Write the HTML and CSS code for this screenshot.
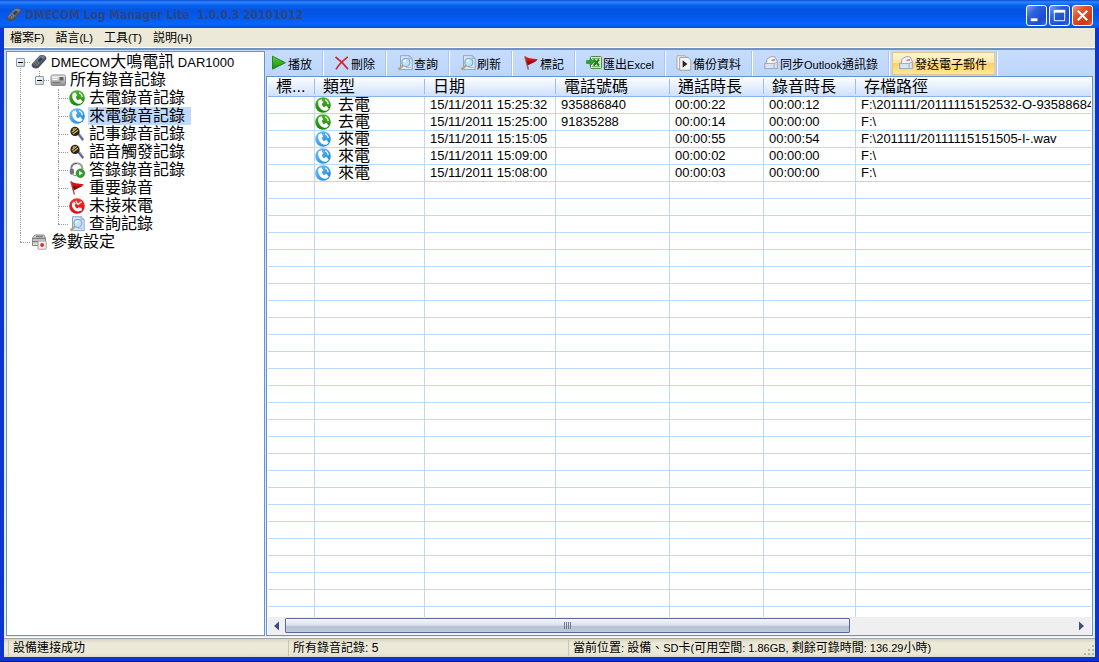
FILE: index.html
```html
<!DOCTYPE html>
<html lang="zh-Hant">
<head>
<meta charset="utf-8">
<title>DMECOM Log Manager Lite</title>
<link rel="stylesheet" href="styles.css">
</head>
<body>
<svg class="sprite" aria-hidden="true">
  <defs>
    <linearGradient id="g-green" x1="0" y1="0" x2="0" y2="1"><stop offset="0" stop-color="#4db52c"/><stop offset="1" stop-color="#1c8307"/></linearGradient>
    <linearGradient id="g-blue" x1="0" y1="0" x2="1" y2="1"><stop offset="0" stop-color="#7cc6f8"/><stop offset="1" stop-color="#0b7fe0"/></linearGradient>
    <linearGradient id="g-red" x1="0" y1="0" x2="0" y2="1"><stop offset="0" stop-color="#f4332c"/><stop offset="1" stop-color="#e00810"/></linearGradient>
    <linearGradient id="g-steel" x1="0" y1="0" x2="0" y2="1"><stop offset="0" stop-color="#f4f4f4"/><stop offset="1" stop-color="#8b8b8b"/></linearGradient>
    <linearGradient id="g-play" x1="0" y1="0" x2="0" y2="1"><stop offset="0" stop-color="#5fd03c"/><stop offset="1" stop-color="#128a0e"/></linearGradient>
    <path id="handset" d="M6.4 2.2 3.6 3.4C1.8 8.4 6 14.2 11.4 13.8L13.8 11.8 11.4 8.8 8.9 10.2C7.7 9.3 6.9 8 6.8 6.8L8.2 5.4Z"/>
    <path id="waves" d="M10 2.8C12 3.6 13.2 5 13.2 7.2" fill="none" stroke="#fff" stroke-width="1.1"/>
  </defs>
  <symbol id="i-out" viewBox="0 0 16 16"><circle cx="8" cy="8" r="7.8" fill="url(#g-green)"/><use href="#handset" fill="#fff"/><use href="#waves"/></symbol>
  <symbol id="i-in" viewBox="0 0 16 16"><circle cx="8" cy="8" r="7.8" fill="url(#g-blue)"/><use href="#handset" fill="#fff"/><use href="#waves"/></symbol>
  <symbol id="i-missed" viewBox="0 0 16 16"><circle cx="8" cy="8" r="7.8" fill="url(#g-red)"/><path d="M3 5.4C2.4 9 5 13.2 9 13.4L13 12.6 12.6 10 9.6 9.3 8.6 10.6C7 10 6 8.6 5.8 7.2L6.8 5.6 4.8 3.6Z" fill="#fff"/><path d="M6.6 3.2 9 6.4 12.6 3.8" fill="none" stroke="#fff" stroke-width="1.3"/></symbol>
  <symbol id="i-device" viewBox="0 0 16 16"><path d="M.8 10 8.6 1.4Q10 .4 13.6 1.4 15.8 2.4 15.4 5L7.6 13.8Q4.8 15.4 1.8 13.6 0 12 .8 10Z" fill="#4a4e58"/><path d="M1.6 9.8 9.2 1.8Q13 1.2 14.6 3L6.6 11.4Q4 12.4 1.6 9.8Z" fill="#747a86"/><path d="M6.6 6.4 9.6 3.4 12 5 8.8 8.2Z" fill="#26406f"/><path d="M3.6 9.6 5.2 10.8M5.2 8 6.8 9.2" stroke="#30343c" stroke-width="1"/></symbol>
  <symbol id="i-recorder" viewBox="0 0 16 16"><rect x="1" y="3" width="14.5" height="10.5" rx="1.5" fill="url(#g-steel)" stroke="#8a8a8a"/><path d="M2.5 5.5h5M2.5 7.5h5" stroke="#fff"/><path d="M2.5 10.5h8" stroke="#777" stroke-width="1.4"/><rect x="9.5" y="5" width="4" height="3.5" fill="#606060"/></symbol>
  <symbol id="i-mic" viewBox="0 0 16 16"><path d="M7.2 7.2 9.4 5.6 15.2 13 13.3 15.2Z" fill="#8d96b7"/><path d="M8.5 7.2 14 13.8" stroke="#4f5a84" stroke-width="1.1"/><circle cx="6" cy="5.4" r="4.6" fill="#25231f"/><path d="M2.8 6.2 7.7 2.2M4 8 9 4.2" stroke="#d8b542" stroke-width="1.2"/><path d="M3.7 3.6 5.5 2.4" stroke="#f2f0e4"/></symbol>
  <symbol id="i-headset" viewBox="0 0 16 16"><path d="M2.2 9.4V6.5C2.4 3 4.7 1.3 7.6 1.3S13.2 3 13.4 7" fill="none" stroke="#9c9c9c" stroke-width="2"/><path d="M2.4 5.4C3.1 2.7 5 1.5 7.6 1.5" fill="none" stroke="#555" stroke-width="1"/><rect x=".8" y="6.5" width="4.2" height="6.2" rx="2" fill="#737373"/><path d="M4 12.8Q5.6 14.2 7.2 13.6" stroke="#777" fill="none"/><circle cx="11.4" cy="11.2" r="4.3" fill="#2ea12a" stroke="#177a15" stroke-width=".6"/><path d="M10.1 8.8 13.8 11.2 10.1 13.6Z" fill="#fff"/></symbol>
  <symbol id="i-flag" viewBox="0 0 16 16"><path d="M1.8 1.2 5.4 14.5" stroke="#a4584c" stroke-width="1.4"/><path d="M2 1.2C5 3.2 8.5 3.6 14.8 4L13 6.2 4.8 10.2Z" fill="#d41718"/><path d="M3.4 5.8C7 6 10.4 5.8 13.4 5.8L4.8 10.2Z" fill="#9c080d"/></symbol>
  <symbol id="i-find" viewBox="0 0 16 16"><path d="M3.5.7H12L15.2 3.6V14.6H3.5Z" fill="#d9e8fa" stroke="#86a8d1"/><path d="M12 .7V3.6H15.2Z" fill="#bcd4ef" stroke="#86a8d1" stroke-width=".7"/><path d="M9 12.5H14" stroke="#a9c4e4"/><path d="M5.8 10.5 1.5 14.7" stroke="#c2a06b" stroke-width="2.4"/><circle cx="8.8" cy="7.4" r="4" fill="#bfe5fb" stroke="#8fa9c0" stroke-width="1.3"/><path d="M6.6 7Q7.2 5.2 9.2 5" fill="none" stroke="#fff" stroke-width="1.3"/></symbol>
  <symbol id="i-settings" viewBox="0 0 16 16"><path d="M1.5 4 4 1H13L14.5 4V11.5H1.5Z" fill="#d7d7d7" stroke="#878787"/><path d="M2 4.5H14M2 7.5H8M5 2.5H12" stroke="#7f7f7f" stroke-width="1.3"/><rect x="7" y="7" width="8.2" height="8.2" rx="1" fill="#f1f1f1" stroke="#a0a0a0"/><circle cx="11.1" cy="11.1" r="2" fill="#de3030"/></symbol>
  <symbol id="i-play" viewBox="0 0 16 16"><path d="M1.5 1.2 14.4 7.7 1.5 14.2Z" fill="url(#g-play)" stroke="#1d7d1a" stroke-width=".9"/></symbol>
  <symbol id="i-delete" viewBox="0 0 16 16"><path d="M1.5 2C5 4.5 11 10 14 14.2M13.8 1.8C9.5 5 4.5 10 2 14.4" fill="none" stroke="#d42330" stroke-width="1.6"/></symbol>
  <symbol id="i-excel" viewBox="0 0 16 16"><rect x="4.5" y="1.5" width="11" height="12" rx="1" fill="#d5ead0" stroke="#4b8a4a"/><path d="M6 3.5H14M6 11.5H14" stroke="#76a86f"/><path d="M7.5 4.5 13 10.5M13 4.5 7.5 10.5" stroke="#267b2a" stroke-width="2"/><path d="M.4 5.4H4V3L8.2 7 4 10.9V8.5H.4Z" fill="#2ea02c" stroke="#18761b" stroke-width=".5"/></symbol>
  <symbol id="i-backup" viewBox="0 0 16 16"><path d="M1 .8H9L11.8 3.5V14H1Z" fill="#f6f6f6" stroke="#a7a7a7"/><path d="M3.7 2.4H12L14.8 5V15.2H3.7Z" fill="#f5f5f5" stroke="#9e9e9e"/><path d="M6.6 5.2 11.4 9 6.6 12.8Z" fill="#252525"/></symbol>
  <symbol id="i-mail" viewBox="0 0 16 16"><path d="M1.5 8.4 3.8 7.2V4.4Q8.4.2 12.2 2.2L14.6 7.2V13.6H1.5Z" fill="#f4f6fb" stroke="#98a4ba"/><path d="M1.8 8.5H11V13.5H1.8ZM11 8.5 14.4 7V13.5H11" fill="#dce3ef" stroke="#a0adc2"/><path d="M8.5 5.4 12 4.8" stroke="#dc6c5b" stroke-width="1.5"/></symbol>
</svg>

<div class="window">
  <header class="titlebar">
    <svg class="icon"><use href="#i-device"/></svg>
    <h1>DMECOM Log Manager Lite&nbsp; 1.0.0.3 20101012</h1>
    <div class="controls">
      <button class="control" aria-label="最小化"><svg viewBox="0 0 20 20"><path d="M4 14.5H11" stroke="#fff" stroke-width="3"/></svg></button>
      <button class="control" aria-label="最大化"><svg viewBox="0 0 20 20"><path d="M4.5 5V15.5H15.5V5" fill="none" stroke="#fff"/><path d="M4 5.5H16" stroke="#fff" stroke-width="3"/></svg></button>
      <button class="control close" aria-label="關閉"><svg viewBox="0 0 20 20"><path d="M5 5 15 15M15 5 5 15" stroke="#fff" stroke-width="2.2"/></svg></button>
    </div>
  </header>

  <nav class="menubar">
    <button>檔案<span class="small">F)</span></button>
    <button>語言<span class="small">(L)</span></button>
    <button>工具<span class="small">(T)</span></button>
    <button>説明<span class="small">(H)</span></button>
  </nav>

  <main class="workspace">
    <aside class="sidebar">
      <ul class="tree">
        <li>
          <button class="toggle" aria-label="收合"></button>
          <div class="node"><svg class="icon"><use href="#i-device"/></svg><span class="name"><span class="latin">DMECOM</span>大鳴電訊<span class="latin"> DAR1000</span></span></div>
          <ul>
            <li>
              <button class="toggle" aria-label="收合"></button>
              <div class="node"><svg class="icon"><use href="#i-recorder"/></svg><span class="name">所有錄音記錄</span></div>
              <ul>
                <li><div class="node"><svg class="icon"><use href="#i-out"/></svg><span class="name">去電錄音記錄</span></div></li>
                <li><div class="node selected"><svg class="icon"><use href="#i-in"/></svg><span class="name">來電錄音記錄</span></div></li>
                <li><div class="node"><svg class="icon"><use href="#i-mic"/></svg><span class="name">記事錄音記錄</span></div></li>
                <li><div class="node"><svg class="icon"><use href="#i-mic"/></svg><span class="name">語音觸發記錄</span></div></li>
                <li><div class="node"><svg class="icon"><use href="#i-headset"/></svg><span class="name">答錄錄音記錄</span></div></li>
                <li><div class="node"><svg class="icon"><use href="#i-flag"/></svg><span class="name">重要錄音</span></div></li>
                <li><div class="node"><svg class="icon"><use href="#i-missed"/></svg><span class="name">未接來電</span></div></li>
                <li><div class="node"><svg class="icon"><use href="#i-find"/></svg><span class="name">查詢記錄</span></div></li>
              </ul>
            </li>
          </ul>
        </li>
        <li><div class="node"><svg class="icon"><use href="#i-settings"/></svg><span class="name">參數設定</span></div></li>
      </ul>
    </aside>

    <section class="content">
      <div class="toolbar">
        <div class="slot"><button class="tool"><svg class="icon"><use href="#i-play"/></svg><span>播放</span></button></div>
        <div class="slot"><button class="tool"><svg class="icon"><use href="#i-delete"/></svg><span>刪除</span></button></div>
        <div class="slot"><button class="tool"><svg class="icon"><use href="#i-find"/></svg><span>查詢</span></button></div>
        <div class="slot"><button class="tool"><svg class="icon"><use href="#i-find"/></svg><span>刷新</span></button></div>
        <div class="slot"><button class="tool"><svg class="icon"><use href="#i-flag"/></svg><span>標記</span></button></div>
        <div class="slot"><button class="tool"><svg class="icon"><use href="#i-excel"/></svg><span>匯出<span class="small">Excel</span></span></button></div>
        <div class="slot"><button class="tool"><svg class="icon"><use href="#i-backup"/></svg><span>備份資料</span></button></div>
        <div class="slot"><button class="tool"><svg class="icon"><use href="#i-mail"/></svg><span>同步<span class="small">Outlook</span>通訊錄</span></button></div>
        <div class="slot hot"><button class="tool"><svg class="icon"><use href="#i-mail"/></svg><span>發送電子郵件</span></button></div>
      </div>

      <div class="list">
        <div class="viewport">
          <table class="records">
            <colgroup><col class="c-mark"><col class="c-type"><col class="c-date"><col class="c-number"><col class="c-call"><col class="c-rec"><col></colgroup>
            <thead>
              <tr><th>標...</th><th>類型</th><th>日期</th><th>電話號碼</th><th>通話時長</th><th>錄音時長</th><th>存檔路徑</th></tr>
            </thead>
            <tbody>
              <tr><td></td><td class="type"><div><svg class="icon"><use href="#i-out"/></svg>去電</div></td><td>15/11/2011 15:25:32</td><td>935886840</td><td>00:00:22</td><td>00:00:12</td><td>F:\201111/20111115152532-O-935886840.wav</td></tr>
              <tr><td></td><td class="type"><div><svg class="icon"><use href="#i-out"/></svg>去電</div></td><td>15/11/2011 15:25:00</td><td>91835288</td><td>00:00:14</td><td>00:00:00</td><td>F:\</td></tr>
              <tr><td></td><td class="type"><div><svg class="icon"><use href="#i-in"/></svg>來電</div></td><td>15/11/2011 15:15:05</td><td></td><td>00:00:55</td><td>00:00:54</td><td>F:\201111/20111115151505-I-.wav</td></tr>
              <tr><td></td><td class="type"><div><svg class="icon"><use href="#i-in"/></svg>來電</div></td><td>15/11/2011 15:09:00</td><td></td><td>00:00:02</td><td>00:00:00</td><td>F:\</td></tr>
              <tr><td></td><td class="type"><div><svg class="icon"><use href="#i-in"/></svg>來電</div></td><td>15/11/2011 15:08:00</td><td></td><td>00:00:03</td><td>00:00:00</td><td>F:\</td></tr>
              <tr class="filler"><td></td><td></td><td></td><td></td><td></td><td></td><td></td></tr>
            </tbody>
          </table>
        </div>
        <div class="scrollbar">
          <button class="arrow" aria-label="向左"><svg viewBox="0 0 16 16"><path d="M11 3.5V12.5L6 8Z"/></svg></button>
          <div class="track"><div class="thumb"><i></i><i></i><i></i><i></i></div></div>
          <button class="arrow" aria-label="向右"><svg viewBox="0 0 16 16"><path d="M5 3.5V12.5L10 8Z"/></svg></button>
        </div>
      </div>
    </section>
  </main>

  <footer class="statusbar">
    <span class="status">設備連接成功</span>
    <span class="status">所有錄音記錄: 5</span>
    <span class="status wide">當前位置<span class="small">: </span>設備、<span class="small">SD</span>卡<span class="small">(</span>可用空間<span class="small">: 1.86GB, </span>剩餘可錄時間<span class="small">: 136.29</span>小時<span class="small">)</span></span>
    <svg class="grip" viewBox="0 0 12 12"><path d="M9 1h2v2H9zM5 5h2v2H5zM9 5h2v2H9zM1 9h2v2H1zM5 9h2v2H5zM9 9h2v2H9z"/></svg>
  </footer>
</div>
</body>
</html>
```
FILE: styles.css
```css
* { box-sizing: border-box; }

body {
  margin: 0;
  background: #0a246a;
  color: #000;
  font: 12px/16px "Liberation Sans", "Noto Sans CJK TC", sans-serif;
}

button {
  margin: 0;
  padding: 0;
  border: 0;
  background: none;
  color: inherit;
  font: inherit;
  white-space: nowrap;
}

.sprite { position: absolute; width: 0; height: 0; }
.icon { flex: none; width: 16px; height: 16px; }
.small { font-size: 11px; }

.window {
  display: flex;
  flex-direction: column;
  height: 100vh;
  padding: 0 4px 4px;
  background: linear-gradient(#0a4fe0, #0a36d2 28px, #0a36d2);
  border-bottom: 1px solid #0a1c5c;
}

/* Title bar */
.titlebar {
  display: flex;
  align-items: center;
  gap: 3px;
  height: 28px;
  margin: 0 -4px;
  padding: 2px 6px 0;
  background: linear-gradient(#0a4bd0 0, #2f86ff 2px, #0a62f0 5px, #0453e2 10px, #0459f0 18px, #0566ff 24px, #0450d8 28px);
}
.titlebar h1 {
  flex: 1;
  margin: 0;
  color: #2c4680;
  font: bold 12px/18px "DejaVu Sans Condensed", "DejaVu Sans", sans-serif;
}
.controls { display: flex; gap: 2px; }
.control {
  width: 21px;
  height: 21px;
  border: 1px solid #fff;
  border-radius: 3px;
  background: linear-gradient(135deg, #7f9ff2, #2b5fe0 35%, #1c4bd2 75%, #2f6cf0);
}
.control.close { background: linear-gradient(135deg, #f09a80, #e1512c 35%, #cf3a14 75%, #e2643c); }
.control svg { display: block; width: 19px; height: 19px; }

/* Menu bar */
.menubar {
  display: flex;
  gap: 11px;
  height: 20px;
  padding: 0 6px;
  border-bottom: 1px solid #fff;
  background: #ece9d8;
}

/* Work area */
.workspace {
  display: flex;
  flex: 1;
  gap: 1px;
  min-height: 0;
  padding: 1px 2px 2px;
  border-top: 2px solid #7392c4;
  background: linear-gradient(#c4dbfc, #e3effe);
}
.sidebar {
  flex: none;
  width: 259px;
  overflow: hidden;
  border: 1px solid #6593cf;
  background: #fff;
}

/* Tree */
.tree,
.tree ul { margin: 0; padding: 0; list-style: none; }
.tree { padding: 1px 4px; }
.tree ul { padding-left: 19px; }
.tree li { position: relative; }
.tree li::before {
  content: "";
  position: absolute;
  top: 0;
  bottom: 0;
  left: 9px;
  border-left: 1px dotted #9a9a9a;
}
.tree li:last-child::before { bottom: auto; height: 9px; }
.tree > li:first-child::before { top: 9px; }
.tree li::after {
  content: "";
  position: absolute;
  top: 9px;
  left: 9px;
  width: 10px;
  border-top: 1px dotted #9a9a9a;
}
.toggle {
  position: absolute;
  z-index: 1;
  top: 5px;
  left: 5px;
  width: 9px;
  height: 9px;
  border: 1px solid #7b9ebd;
  border-radius: 1px;
  background: linear-gradient(#000, #000) center / 5px 1px no-repeat, linear-gradient(135deg, #fff, #d5cfc3);
}
.node {
  display: flex;
  align-items: center;
  gap: 3px;
  height: 18px;
  padding-left: 20px;
  font-size: 16px;
  line-height: 18px;
}
.name { padding: 0 6px 0 1px; white-space: pre; }
.selected .name { background: #bfd9fb; }
.latin { font-size: 13px; }

/* Toolbar */
.content { display: flex; flex: 1; flex-direction: column; min-width: 0; }
.toolbar {
  display: flex;
  height: 25px;
  background: linear-gradient(#c6dcfd, #bcd6fb);
}
.slot {
  display: flex;
  flex: none;
  padding: 1px 0;
  border-right: 1px solid #fff;
  box-shadow: inset -1px 0 #a9c6ee;
}
.tool { display: flex; align-items: center; gap: 1px; padding: 0 11px 0 10px; }
.slot:first-child .tool { padding-left: 5px; }
.tool > span { padding-top: 2px; }
.tool .icon { margin-bottom: 2px; }
.hot { padding: 1px 2px; }
.hot .tool {
  padding: 0 7px 0 5px;
  border: 1px solid #e2c78b;
  background: linear-gradient(#fff6d8, #ffe6a2 45%, #ffd35c 50%, #ffe79a);
}

/* Record list */
.list {
  display: flex;
  flex: 1;
  flex-direction: column;
  min-height: 0;
  padding: 0 1px;
  border: 1px solid #6593cf;
  background: #fff;
}
.viewport { flex: 1; min-height: 0; overflow: hidden; }
.records {
  width: 100%;
  height: 100%;
  table-layout: fixed;
  border-collapse: separate;
  border-spacing: 0;
}
.c-mark { width: 47px; }
.c-type { width: 110px; }
.c-date { width: 131px; }
.c-number { width: 114px; }
.c-call { width: 94px; }
.c-rec { width: 92px; }
.records th {
  height: 20px;
  padding: 0 0 0 8px;
  overflow: hidden;
  border-bottom: 1px solid #8db4e8;
  background: linear-gradient(#9dbfee, #9dbfee) right 2px / 1px 15px no-repeat, linear-gradient(#fff, #e8f1fe 45%, #cfe0fa);
  font-size: 16px;
  font-weight: normal;
  line-height: 19px;
  text-align: left;
  white-space: nowrap;
}
.records th:last-child { background: linear-gradient(#fff, #e8f1fe 45%, #cfe0fa); }
.records td {
  height: 17px;
  padding: 0 0 0 5px;
  overflow: hidden;
  border-right: 1px solid #c5d5ec;
  border-bottom: 1px solid #b9dafa;
  font-size: 13px;
  line-height: 16px;
  white-space: nowrap;
}
.records td:last-child { border-right: 0; }
.records .type { padding: 0; font-size: 16px; }
.type div { display: flex; gap: 7px; height: 16px; }
.records .filler td {
  height: auto;
  border-bottom: 0;
  background: repeating-linear-gradient(transparent 0 16px, #b9dafa 16px 17px);
}

/* Horizontal scroll bar */
.scrollbar { display: flex; height: 18px; background: #efeff1; }
.arrow { width: 17px; }
.arrow svg { display: block; width: 16px; height: 16px; fill: #3c4f7d; }
.track { flex: 1; padding: 1px 0; }
.thumb {
  display: flex;
  align-items: center;
  justify-content: center;
  gap: 1px;
  width: 71.6%;
  height: 15px;
  border: 1px solid #5c6b95;
  border-radius: 1px;
  background: linear-gradient(#f4f6fa, #dde3ec 45%, #b4c1d3 60%, #bfcbdc);
}
.thumb i { width: 1px; height: 7px; background: #6f7c98; }

/* Status bar */
.statusbar {
  display: flex;
  align-items: center;
  height: 19px;
  border-top: 1px solid #a5a394;
  background: linear-gradient(#d8d4c2, #ece9d8 4px, #ece9d8 14px, #dedac8);
  box-shadow: 0 -1px #fff;
}
.status {
  width: 280px;
  margin-left: 4px;
  margin-right: -4px;
  padding-left: 4px;
  border-left: 1px solid #c8c5b2;
  white-space: nowrap;
}
.wide { flex: 1; }
.grip { width: 12px; height: 12px; margin-top: 4px; fill: #b8b4a2; }
```
